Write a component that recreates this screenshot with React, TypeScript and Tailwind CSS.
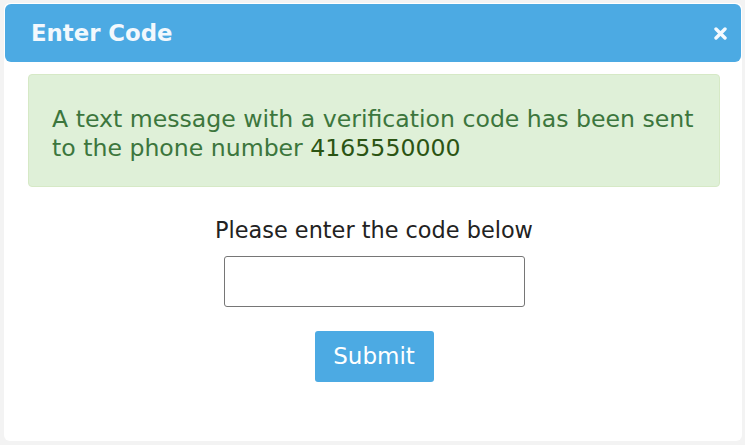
export default function App() {
  return (
    <div
      className="w-[745px] h-[445px] bg-[#f3f3f3] pt-[3px] pl-[4px] pr-[3px] pb-[4px]"
      style={{ fontFamily: '"DejaVu Sans", Verdana, sans-serif' }}
    >
      <div className="h-full bg-white rounded-[6px] p-[1px] flex flex-col">
        <div className="h-[58px] shrink-0 bg-[#4caae3] rounded-[6px] flex items-center justify-between pl-[26px] pr-[14px]">
          <div className="text-[22.8px] font-bold text-[#f2f8fd]">Enter Code</div>
          <svg width="13" height="13" viewBox="0 0 13 13" className="mt-[1px]">
            <path d="M2 2 L11 11 M11 2 L2 11" stroke="#f4faff" strokeWidth="3.4" strokeLinecap="round" />
          </svg>
        </div>
        <div className="pl-[23px] pr-[21px] pt-[12px]">
          <div className="bg-[#dff0d8] border border-[#d6e9c6] rounded-[4px] pl-[23px] pr-[10px] pt-[30px] pb-[23px] text-[23.6px] leading-[29px] text-[#3c763d]">
            A text message with a verification code has been sent to the phone number{' '}
            <span className="text-[#2b5413]">4165550000</span>
          </div>
        </div>
        <div className="flex flex-col items-center pt-[29px] pl-[2px]">
          <div className="text-[22.4px] leading-[29px] text-[#222]">Please enter the code below</div>
          <input
            type="text"
            className="mt-[11px] w-[301px] h-[51px] border border-[#767676] rounded-[3px] outline-none px-2"
          />
          <button className="mt-[24px] w-[119px] h-[51px] bg-[#4caae3] rounded-[3px] text-white text-[23px]">
            Submit
          </button>
        </div>
      </div>
    </div>
  );
}
